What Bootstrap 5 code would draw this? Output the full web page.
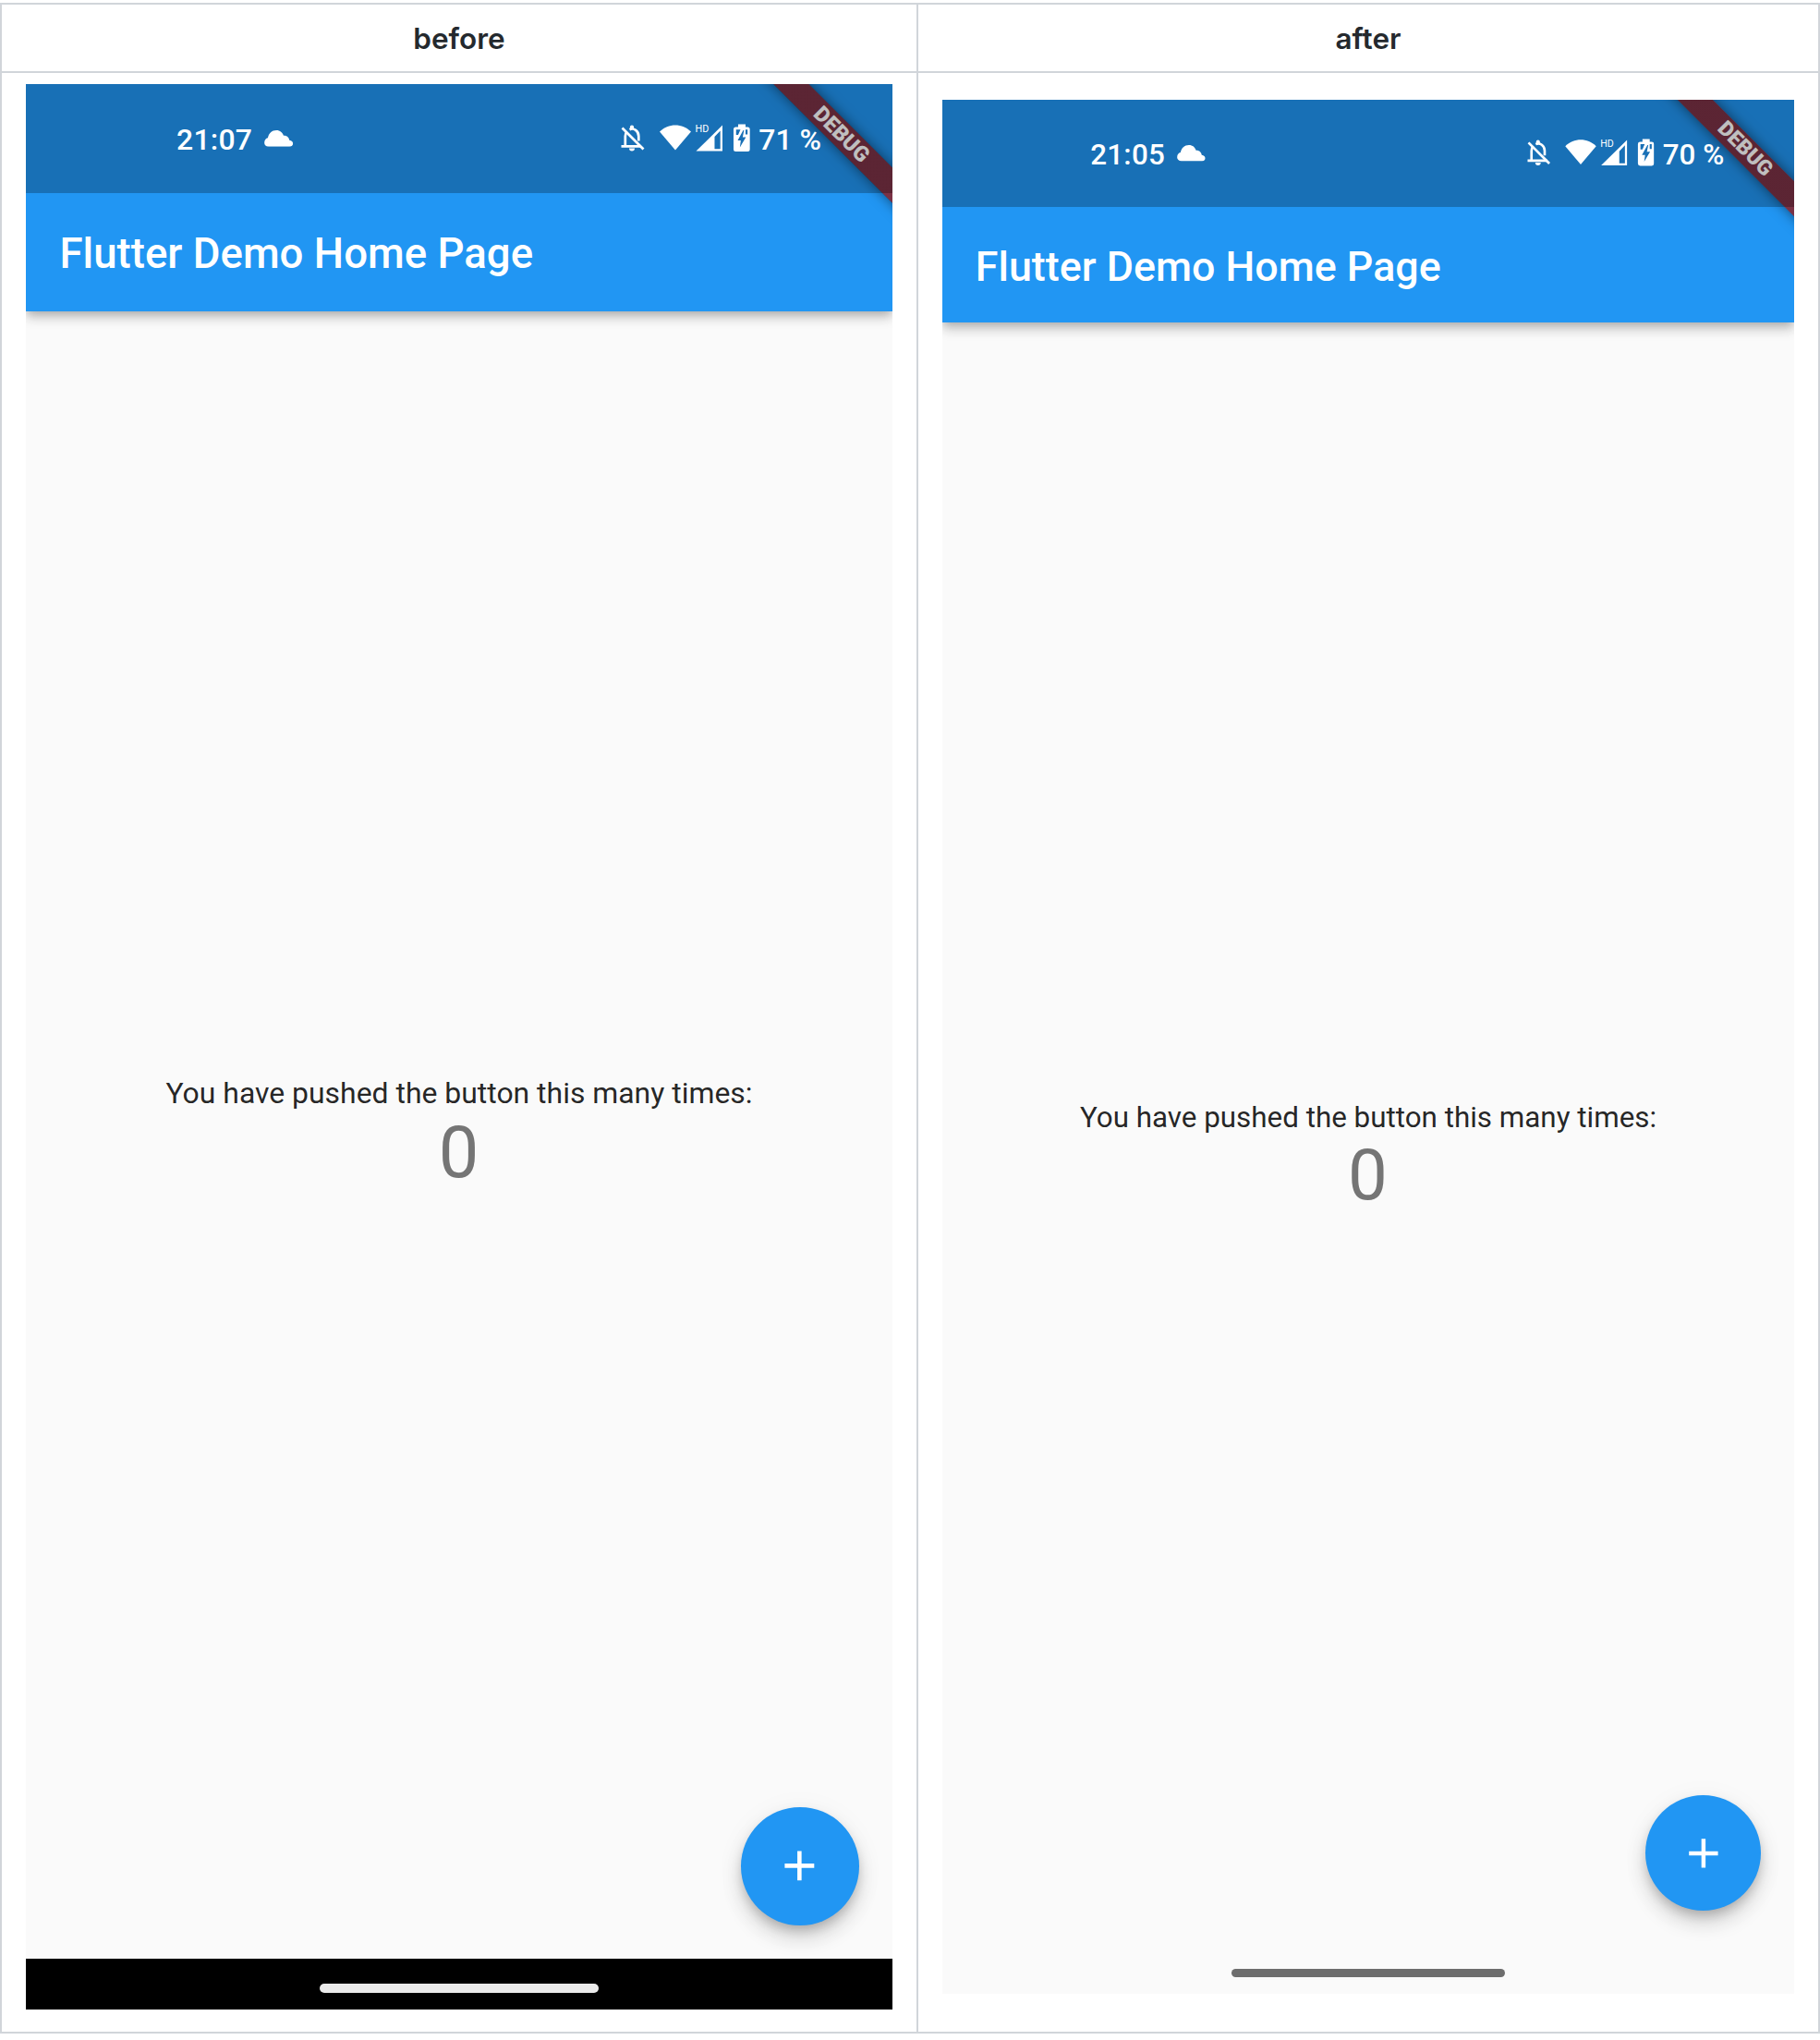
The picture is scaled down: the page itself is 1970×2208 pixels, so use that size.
<!DOCTYPE html>
<html lang="en">
<head>
<meta charset="utf-8">
<title>before / after</title>
<meta name="viewport" content="width=device-width, initial-scale=1">
<link href="https://cdn.jsdelivr.net/npm/bootstrap@5.3.0/dist/css/bootstrap.min.css" rel="stylesheet">
<style>
  body { background: #fff; font-family: Inter, "Liberation Sans", sans-serif; overflow: hidden; }
  .compare { width: 1970px; height: 2198px; margin-top: 3px; border: 2px solid #d1d5da; }
  .compare-head { height: 74px; border-bottom: 2px solid #d1d5da; color: #24292e; font-size: 31.5px; font-weight: 600; line-height: 74px; }
  .cell-before { width: 992px; border-right: 2px solid #d1d5da; }
  .cell-after { width: 974px; }
  .compare-head > div { height: 74px; }
  /* --u is one device-independent pixel of the phone */
  .phone { font-family: Roboto, "Noto Sans", sans-serif; background: #fafafa; color: rgba(0,0,0,.87); }
  .phone-a { --u: 2.27985px; width: 938px; height: 2084px; margin-top: 12px; margin-left: 26px; --sb: 118px; }
  .phone-b { --u: 2.24096px; width: 922px; height: 2050px; margin-top: 29px; margin-left: 26px; --sb: 116px; }
  .app-top { background: #2196f3; flex: none; z-index: 1;
    box-shadow: 0 calc(var(--u)*2) calc(var(--u)*4) calc(var(--u)*-1) rgba(0,0,0,.2), 0 calc(var(--u)*4) calc(var(--u)*5) rgba(0,0,0,.14), 0 var(--u) calc(var(--u)*8) rgba(0,0,0,.06); }
  .status { height: var(--sb); background: rgba(0,0,0,.25); z-index: 3; color: #fff; font-size: calc(var(--u)*14); font-weight: 500; line-height: 1; padding-left: calc(var(--u)*71.5); padding-right: calc(var(--u)*33.8); }
  .status svg { display: block; fill: #fff; flex: none; }
  .status span { padding-top: 3px; }
  .clock { letter-spacing: .25px; }
  .cloud { width: calc(var(--u)*13.75); height: calc(var(--u)*7.8); margin-left: 13px; }
  .sysicons { width: calc(var(--u)*61.4); height: calc(var(--u)*14.04); }
  .app-title { height: calc(var(--u)*56); padding-left: calc(var(--u)*16); padding-top: 4px; font-size: calc(var(--u)*20); font-weight: 500; color: #fff; }
  .body-area { padding-top: 2px; }
  .msg { font-size: calc(var(--u)*14); line-height: calc(var(--u)*16); }
  .count { font-size: calc(var(--u)*34); line-height: calc(var(--u)*40); color: #757575; padding-right: 1px; }
  .fab { width: calc(var(--u)*56); height: calc(var(--u)*56); right: calc(var(--u)*16); bottom: calc(var(--u)*16); background: #2196f3;
    box-shadow: 0 calc(var(--u)*3) calc(var(--u)*5) calc(var(--u)*-1) rgba(0,0,0,.2), 0 calc(var(--u)*6) calc(var(--u)*10) rgba(0,0,0,.14), 0 calc(var(--u)*2) calc(var(--u)*14) rgba(0,0,0,.05); }
  .phone-b .fab { bottom: calc(var(--u)*40); }
  .fab svg { width: calc(var(--u)*24); height: calc(var(--u)*24); fill: #fff; }
  .nav-strip { height: 55px; background: #000; flex: none; }
  .pill { width: calc(var(--u)*132.4); height: 10px; border-radius: 5px; background: #ebebeb; }
  .nav-strip .pill { margin-top: 27px; }
  .pill-dark { height: 9px; bottom: 18px; left: 312.5px; background: #6d6d6d; }
  .ribbon { width: calc(var(--u)*120); height: calc(var(--u)*12); right: calc(var(--u)*-36); top: calc(var(--u)*18); transform: rotate(45deg);
    background: linear-gradient(rgba(183,28,28,.63), rgba(183,28,28,.63)), rgba(0,0,0,.42); box-shadow: 0 0 calc(var(--u)*6) rgba(0,0,0,.5); color: #fff; z-index: 2;
    font-size: calc(var(--u)*10.2); font-weight: 900; line-height: calc(var(--u)*12); }
</style>
<script src="https://cdn.jsdelivr.net/npm/bootstrap@5.3.0/dist/js/bootstrap.bundle.min.js"></script>
</head>
<body>
<svg width="0" height="0" class="position-absolute">
  <symbol id="cloud" viewBox="0 0 32 22" preserveAspectRatio="none"><path d="M5 22a5 5 0 0 1-4.800-5.500C.2 13 1.800 10.800 4 10.200 5 4 8.500 0 13.400 0c4.200 0 6.800 3 8 7.200 3.600-.3 6 2.500 6.400 6.200 2.400.4 4 2.200 4 4.600 0 2.400-1.600 4-4 4z"/></symbol>
  <symbol id="icons" viewBox="0 0 140 32">
    <g fill="none" stroke="#fff" stroke-width="2.700">
      <path d="M1.500 4.500 24.500 27.500"/>
      <path d="M0.500 24.300H22M4.800 24V13.500c0-2 .7-3.800 1.900-5.200M9.500 6.200c4.600-2.200 9.800 1.500 9.800 7.300v5"/>
    </g>
    <path d="M9.900 5V3.500a2.100 2.100 0 0 1 4.200 0V5zM9 26.500h6a3 3 0 0 1-6 0z"/>
    <path d="M42 8.500C51.500 -1 66.500 -1 76 8.500L59 28.500z"/>
    <path fill-rule="evenodd" d="M110 1.500V29.500H81.500zM107.700 7.500 101.500 14V27.200H107.700z"/>
    <path fill-rule="evenodd" d="M127 .5h8V3.500h2.200a2.500 2.500 0 0 1 2.500 2.500v21.500a2.500 2.500 0 0 1-2.500 2.500h-12.700a2.500 2.500 0 0 1-2.500-2.500V6a2.500 2.500 0 0 1 2.500-2.500H127zM132.500 7 126.500 18h3.400l-1 7.500 6.500-11h-3.500l1.500-7.500z"/>
    <path d="M124.800 12V6.200h4.700L127 12zM135 11.500V6.200h2.200v5.300z" fill="#1970b6"/>
  </symbol>
  <symbol id="plus" viewBox="0 0 24 24"><path d="M19 13h-6v6h-2v-6H5v-2h6V5h2v6h6v2z"/></symbol>
</svg>

<div class="compare d-flex flex-column">
  <div class="compare-head d-flex text-center">
    <div class="cell-before">before</div>
    <div class="cell-after">after</div>
  </div>
  <div class="d-flex flex-grow-1">
    <div class="cell-before">
      <div class="phone phone-a position-relative overflow-hidden d-flex flex-column">
        <header class="app-top position-relative">
          <div class="status position-relative d-flex align-items-center">
            <span class="clock">21:07</span>
            <svg class="cloud"><use href="#cloud"/></svg>
            <svg class="sysicons ms-auto" viewBox="0 0 140 32"><use href="#icons" width="140" height="32"/><text x="80.600" y="9.300" font-family="Roboto" font-size="11.200" font-weight="400" textLength="14.800" lengthAdjust="spacingAndGlyphs">HD</text></svg>
            <span style="margin-left:9px">71 %</span>
          </div>
          <div class="app-title d-flex align-items-center">Flutter Demo Home Page</div>
          <div class="ribbon position-absolute text-center">DEBUG</div>
        </header>
        <main class="body-area flex-grow-1 position-relative d-flex flex-column align-items-center justify-content-center">
          <div class="msg">You have pushed the button this many times:</div>
          <div class="count">0</div>
          <div class="fab position-absolute rounded-circle d-flex align-items-center justify-content-center"><svg><use href="#plus"/></svg></div>
        </main>
        <div class="nav-strip d-flex justify-content-center"><div class="pill"></div></div>
      </div>
    </div>
    <div class="cell-after">
      <div class="phone phone-b position-relative overflow-hidden d-flex flex-column">
        <header class="app-top position-relative">
          <div class="status position-relative d-flex align-items-center">
            <span class="clock">21:05</span>
            <svg class="cloud"><use href="#cloud"/></svg>
            <svg class="sysicons ms-auto" viewBox="0 0 140 32"><use href="#icons" width="140" height="32"/><text x="80.600" y="9.300" font-family="Roboto" font-size="11.200" font-weight="400" textLength="14.800" lengthAdjust="spacingAndGlyphs">HD</text></svg>
            <span style="margin-left:9px">70 %</span>
          </div>
          <div class="app-title d-flex align-items-center">Flutter Demo Home Page</div>
          <div class="ribbon position-absolute text-center">DEBUG</div>
        </header>
        <main class="body-area flex-grow-1 position-relative d-flex flex-column align-items-center justify-content-center">
          <div class="msg">You have pushed the button this many times:</div>
          <div class="count">0</div>
          <div class="fab position-absolute rounded-circle d-flex align-items-center justify-content-center"><svg><use href="#plus"/></svg></div>
          <div class="pill pill-dark position-absolute"></div>
        </main>
      </div>
    </div>
  </div>
</div>
</body>
</html>
